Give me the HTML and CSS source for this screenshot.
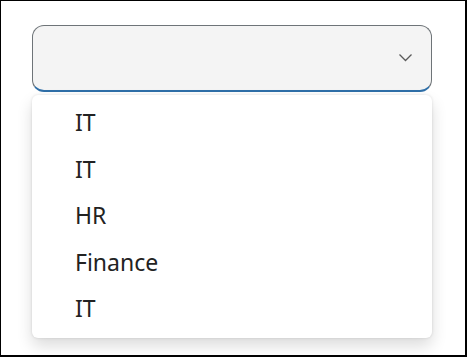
FILE: index.html
```html
<!DOCTYPE html>
<html>
<head>
<meta charset="utf-8">
<link rel="stylesheet" href="styles.css">
</head>
<body>
<div class="frame">
  <div class="select">
    <svg class="chev" width="16" height="10" viewBox="0 0 16 10"><path d="M1.5 1.5 L7.5 7.5 L13.5 1.5" fill="none" stroke="#5a5a5a" stroke-width="1.3"/></svg>
  </div>
  <ul class="menu">
    <li>IT</li>
    <li>IT</li>
    <li>HR</li>
    <li>Finance</li>
    <li>IT</li>
  </ul>
</div>
</body>
</html>
```
FILE: styles.css
```css
html, body { margin: 0; padding: 0; background: #fff; }
.frame {
  box-sizing: border-box;
  width: 467px;
  height: 357px;
  border-style: solid;
  border-color: #000;
  border-width: 1px 2px 2px 1px;
  padding: 24px 0 0 31px;
  font-family: "Noto Sans", "Open Sans", sans-serif;
}
.select {
  box-sizing: border-box;
  width: 400px;
  height: 67px;
  background: #f4f4f4;
  border: 1px solid #6e7478;
  border-bottom: 2px solid #2f6fa8;
  border-radius: 12px;
  display: flex;
  align-items: center;
  justify-content: flex-end;
  padding-right: 17px;
}
.chev { display: block; margin-top: 0; }
.menu {
  list-style: none;
  margin: 3px 0 0 0;
  padding: 4px 0 4px;
  width: 400px;
  box-sizing: border-box;
  height: 243px;
  background: #fff;
  border-radius: 6px;
  box-shadow: 0 0 3px rgba(0,0,0,0.12), 0 8px 16px rgba(0,0,0,0.14);
}
.menu li {
  height: 46.5px;
  line-height: 46.5px;
  padding-left: 43px;
  font-size: 23px;
  color: #222;
}
```
